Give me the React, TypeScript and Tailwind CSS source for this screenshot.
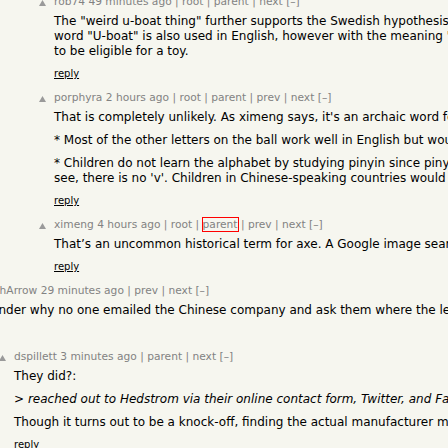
import React from "react";

type Comment = {
  level: number;
  user: string;
  age: string;
  nav: string[];
  paras: React.ReactNode[][];
  focused?: string;
};

const comments: Comment[] = [
  {
    level: 2,
    user: "rob74",
    age: "49 minutes ago",
    nav: ["root", "parent", "next"],
    paras: [
      [
        'The "weird u-boat thing" further supports the Swedish hypothesis, since the Swedish',
        'word "U-boat" is also used in English, however with the meaning "submarine", which doesn\'t seem',
        "to be eligible for a toy.",
      ],
    ],
  },
  {
    level: 2,
    user: "porphyra",
    age: "2 hours ago",
    nav: ["root", "parent", "prev", "next"],
    paras: [
      ["That is completely unlikely. As ximeng says, it's an archaic word for axe, and no toy company would use it."],
      ["* Most of the other letters on the ball work well in English but would be odd choices in Chinese."],
      [
        "* Children do not learn the alphabet by studying pinyin since pinyin uses a different set of letters. As you can",
        "see, there is no 'v'. Children in Chinese-speaking countries would learn the English alphabet instead.",
      ],
    ],
  },
  {
    level: 2,
    user: "ximeng",
    age: "4 hours ago",
    nav: ["root", "parent", "prev", "next"],
    focused: "parent",
    paras: [["That’s an uncommon historical term for axe. A Google image search shows mostly weapons."]],
  },
  {
    level: 0,
    user: "PunchArrow",
    age: "29 minutes ago",
    nav: ["prev", "next"],
    paras: [["I wonder why no one emailed the Chinese company and ask them where the letters came from."]],
  },
  {
    level: 1,
    user: "dspillett",
    age: "3 minutes ago",
    nav: ["parent", "next"],
    paras: [
      ["They did?:"],
      [
        <>
          &gt; <i>reached out to Hedstrom via their online contact form, Twitter, and Facebook but got no answer</i>
        </>,
      ],
      ["Though it turns out to be a knock-off, finding the actual manufacturer may be harder than it sounds."],
    ],
  },
];

const indent: Record<number, string> = { 0: "pl-0", 1: "pl-[40px]", 2: "pl-[80px]" };

function VoteArrow() {
  return (
    <svg width="7" height="6" viewBox="0 0 7 6" className="ml-[-1px] mt-[4px]">
      <path d="M3.5 0 L7 6 L0 6 Z" fill="#9a9a9a" />
    </svg>
  );
}

function CommentRow({ c, first }: { c: Comment; first: boolean }) {
  return (
    <div className={`flex ${indent[c.level]} ${first ? "" : "mt-[12px]"}`}>
      <div className="w-[14px] shrink-0">
        <VoteArrow />
      </div>
      <div className="whitespace-nowrap">
        <div className="text-[10.67px] leading-[12px] text-[#828282]">
          <span>{c.user}</span> <span>{c.age}</span>
          {c.nav.map((n) => (
            <span key={n}>
              {" | "}
              <span className={c.focused === n ? "outline outline-[#ff0000]" : ""}>{n}</span>
            </span>
          ))}{" "}
          [–]
        </div>
        <div className="mt-[6px] flex flex-col gap-[8px] text-[12px] leading-[15px] text-black">
          {c.paras.map((p, i) => (
            <p key={i}>
              {p.map((line, j) => (
                <React.Fragment key={j}>
                  {line}
                  {j < p.length - 1 && <br />}
                </React.Fragment>
              ))}
            </p>
          ))}
        </div>
        <div className="mt-[9px] text-[10px] leading-[12px] text-black">
          <u>reply</u>
        </div>
      </div>
    </div>
  );
}

export default function App() {
  return (
    <main className="h-[448px] w-[448px] overflow-hidden bg-[#f6f6ef] font-['DejaVu_Sans',Verdana,sans-serif]">
      <div className="ml-[-40px] mt-[-4px]">
        {comments.map((c, i) => (
          <CommentRow key={c.user} c={c} first={i === 0} />
        ))}
      </div>
    </main>
  );
}
